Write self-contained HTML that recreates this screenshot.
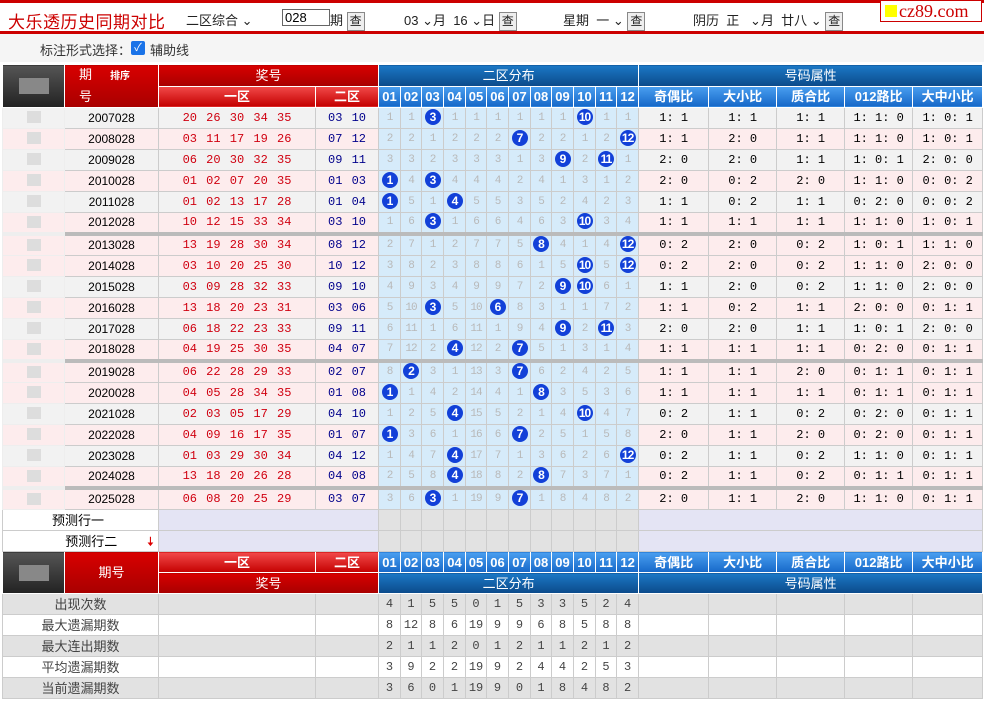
<!DOCTYPE html>
<html><head><meta charset="utf-8">
<style>
*{margin:0;padding:0;box-sizing:border-box}
body{width:984px;height:702px;overflow:hidden;background:#fff;font-family:"Liberation Sans","Noto Sans CJK SC",sans-serif;font-size:12px;color:#000;position:relative}
.top{position:absolute;left:0;top:0;width:984px;height:34px;border-top:3px solid #c00;border-bottom:3px solid #c00}
.title{position:absolute;left:8px;top:5px;font-size:17px;color:#c00;letter-spacing:0.5px}
.tb{position:absolute;top:7px;font-size:13px;color:#222}
.q{display:inline-block;border:1px solid #888;background:#eee;font-size:12px;padding:1px 2px;line-height:15px;vertical-align:middle}
.inp{position:absolute;left:282px;top:6px;width:48px;height:17px;border:1px solid #666;font-size:13px;padding-left:2px;line-height:15px}
.logo{position:absolute;left:880px;top:0;width:102px;height:22px;border:1px solid #c00;background:#fff;font-family:"Liberation Serif",serif;font-size:18px;color:#c00;line-height:20px;padding-left:4px}
.logo i{display:inline-block;width:12px;height:12px;background:#ff0;margin-right:2px}
.bar{position:absolute;left:0;top:34px;width:984px;height:28px;background:#f5f5f5;font-size:13px;color:#333}
.bar span{position:absolute;left:40px;top:6px}
.cb{position:absolute;left:131px;top:7px;width:14px;height:14px;background:#1a73e8;border-radius:2px;color:#fff;font-size:11px;line-height:14px;text-align:center}
.bar em{position:absolute;left:150px;top:6px;font-style:normal}
table{position:absolute;left:2px;top:64px;border-collapse:collapse;table-layout:fixed;width:980px}
td{height:21px;border:1px solid #ccc;text-align:center;padding:0;white-space:nowrap;overflow:hidden;line-height:19px}
.hr{background:linear-gradient(#d80000,#a80000);color:#fff;font-size:13px;border-color:#fff}
.hr2{background:linear-gradient(#f24a4a,#c40000);color:#fff;font-size:13px;font-weight:bold;border-color:#fff}
.hb{background:linear-gradient(#1b78c6,#0b4a8a);color:#fff;font-size:13px;border-color:#fff}
.hb2{background:linear-gradient(#4a9ff0,#1668c8);color:#fff;font-size:13px;font-weight:bold;border-color:#fff}
.hd{background:linear-gradient(#555,#222);border-color:#fff}
.hd i{display:inline-block;width:30px;height:16px;background:#888;vertical-align:middle}
.c0 i{display:inline-block;background:#ddd;width:14px;height:12px;vertical-align:middle}
.d td{font-family:"Liberation Mono","Noto Sans CJK SC",monospace;font-size:12px}
.d td:nth-child(2){font-family:"Liberation Sans",sans-serif}
.d td:nth-child(3){color:#d00010;word-spacing:2px}
.d td:nth-child(4){color:#00008b;word-spacing:2px}
.d td:nth-child(n+5):nth-child(-n+16){background:#d6ebfa;color:#b8b8b8;font-size:11px;letter-spacing:-1px}
.d td b{display:inline-block;width:16px;height:16px;border-radius:50%;background:#1240d8;color:#fff;font-family:"Liberation Sans",sans-serif;font-size:12px;line-height:16px;letter-spacing:-1px;vertical-align:middle}
.g td{background:#f2f2f2}
.p td{background:#fdeced}
.s td{border-top:4px solid #bbb}
.c0{border-color:#eee!important}
.pr td{background:#e4e4f4}
.pr td.w{background:#fff;text-align:right;padding-right:50px;font-size:13px}
.pr td.gr{background:#e2e2e2}
.st td{font-size:13px;color:#444}
.st td:nth-child(n+4){font-family:"Liberation Mono",monospace;font-size:12px}
.st.a td{background:#e2e2e2}
.st.b td{background:#fff}
</style></head><body>
<div class="top">
<div class="title">大乐透历史同期对比</div>
<div class="tb" style="left:186px">二区综合 ⌄</div>
<div class="inp">028</div>
<div class="tb" style="left:330px">期 <span class="q">查</span></div>
<div class="tb" style="left:404px">03 ⌄月 &nbsp;16 ⌄日 <span class="q">查</span></div>
<div class="tb" style="left:563px">星期 &nbsp;一 ⌄ <span class="q">查</span></div>
<div class="tb" style="left:693px">阴历 &nbsp;正 &nbsp; ⌄月 &nbsp;廿八 ⌄ <span class="q">查</span></div>
</div>
<div class="logo"><i></i>cz89.com</div>
<div class="bar"><span>标注形式选择：</span><div class="cb">✓</div><em>辅助线</em></div>
<table>
<colgroup><col style="width:62px"><col style="width:94px"><col style="width:157px"><col style="width:63px">
<col style="width:22px"><col style="width:21px"><col style="width:22px"><col style="width:22px"><col style="width:21px"><col style="width:22px"><col style="width:22px"><col style="width:21px"><col style="width:22px"><col style="width:22px"><col style="width:21px"><col style="width:22px">
<col style="width:70px"><col style="width:68px"><col style="width:68px"><col style="width:68px"><col style="width:70px"></colgroup>
<tr><td rowspan="2" class="hd"><i></i></td><td rowspan="2" class="hr" style="text-align:left;padding-left:14px;line-height:20px">期 &nbsp; &nbsp; <b style="font-size:10px">排序</b><br>号</td><td colspan="2" class="hr">奖号</td><td colspan="12" class="hb">二区分布</td><td colspan="5" class="hb">号码属性</td></tr>
<tr><td class="hr2">一区</td><td class="hr2">二区</td><td class="hb2">01</td><td class="hb2">02</td><td class="hb2">03</td><td class="hb2">04</td><td class="hb2">05</td><td class="hb2">06</td><td class="hb2">07</td><td class="hb2">08</td><td class="hb2">09</td><td class="hb2">10</td><td class="hb2">11</td><td class="hb2">12</td><td class="hb2">奇偶比</td><td class="hb2">大小比</td><td class="hb2">质合比</td><td class="hb2">012路比</td><td class="hb2">大中小比</td></tr>
<tr class="d g"><td class="c0"><i></i></td><td>2007028</td><td>20 26 30 34 35</td><td>03 10</td><td>1</td><td>1</td><td><b>3</b></td><td>1</td><td>1</td><td>1</td><td>1</td><td>1</td><td>1</td><td><b>10</b></td><td>1</td><td>1</td><td>1: 1</td><td>1: 1</td><td>1: 1</td><td>1: 1: 0</td><td>1: 0: 1</td></tr>
<tr class="d p"><td class="c0"><i></i></td><td>2008028</td><td>03 11 17 19 26</td><td>07 12</td><td>2</td><td>2</td><td>1</td><td>2</td><td>2</td><td>2</td><td><b>7</b></td><td>2</td><td>2</td><td>1</td><td>2</td><td><b>12</b></td><td>1: 1</td><td>2: 0</td><td>1: 1</td><td>1: 1: 0</td><td>1: 0: 1</td></tr>
<tr class="d g"><td class="c0"><i></i></td><td>2009028</td><td>06 20 30 32 35</td><td>09 11</td><td>3</td><td>3</td><td>2</td><td>3</td><td>3</td><td>3</td><td>1</td><td>3</td><td><b>9</b></td><td>2</td><td><b>11</b></td><td>1</td><td>2: 0</td><td>2: 0</td><td>1: 1</td><td>1: 0: 1</td><td>2: 0: 0</td></tr>
<tr class="d p"><td class="c0"><i></i></td><td>2010028</td><td>01 02 07 20 35</td><td>01 03</td><td><b>1</b></td><td>4</td><td><b>3</b></td><td>4</td><td>4</td><td>4</td><td>2</td><td>4</td><td>1</td><td>3</td><td>1</td><td>2</td><td>2: 0</td><td>0: 2</td><td>2: 0</td><td>1: 1: 0</td><td>0: 0: 2</td></tr>
<tr class="d g"><td class="c0"><i></i></td><td>2011028</td><td>01 02 13 17 28</td><td>01 04</td><td><b>1</b></td><td>5</td><td>1</td><td><b>4</b></td><td>5</td><td>5</td><td>3</td><td>5</td><td>2</td><td>4</td><td>2</td><td>3</td><td>1: 1</td><td>0: 2</td><td>1: 1</td><td>0: 2: 0</td><td>0: 0: 2</td></tr>
<tr class="d p"><td class="c0"><i></i></td><td>2012028</td><td>10 12 15 33 34</td><td>03 10</td><td>1</td><td>6</td><td><b>3</b></td><td>1</td><td>6</td><td>6</td><td>4</td><td>6</td><td>3</td><td><b>10</b></td><td>3</td><td>4</td><td>1: 1</td><td>1: 1</td><td>1: 1</td><td>1: 1: 0</td><td>1: 0: 1</td></tr>
<tr class="d p s"><td class="c0"><i></i></td><td>2013028</td><td>13 19 28 30 34</td><td>08 12</td><td>2</td><td>7</td><td>1</td><td>2</td><td>7</td><td>7</td><td>5</td><td><b>8</b></td><td>4</td><td>1</td><td>4</td><td><b>12</b></td><td>0: 2</td><td>2: 0</td><td>0: 2</td><td>1: 0: 1</td><td>1: 1: 0</td></tr>
<tr class="d p"><td class="c0"><i></i></td><td>2014028</td><td>03 10 20 25 30</td><td>10 12</td><td>3</td><td>8</td><td>2</td><td>3</td><td>8</td><td>8</td><td>6</td><td>1</td><td>5</td><td><b>10</b></td><td>5</td><td><b>12</b></td><td>0: 2</td><td>2: 0</td><td>0: 2</td><td>1: 1: 0</td><td>2: 0: 0</td></tr>
<tr class="d g"><td class="c0"><i></i></td><td>2015028</td><td>03 09 28 32 33</td><td>09 10</td><td>4</td><td>9</td><td>3</td><td>4</td><td>9</td><td>9</td><td>7</td><td>2</td><td><b>9</b></td><td><b>10</b></td><td>6</td><td>1</td><td>1: 1</td><td>2: 0</td><td>0: 2</td><td>1: 1: 0</td><td>2: 0: 0</td></tr>
<tr class="d p"><td class="c0"><i></i></td><td>2016028</td><td>13 18 20 23 31</td><td>03 06</td><td>5</td><td>10</td><td><b>3</b></td><td>5</td><td>10</td><td><b>6</b></td><td>8</td><td>3</td><td>1</td><td>1</td><td>7</td><td>2</td><td>1: 1</td><td>0: 2</td><td>1: 1</td><td>2: 0: 0</td><td>0: 1: 1</td></tr>
<tr class="d g"><td class="c0"><i></i></td><td>2017028</td><td>06 18 22 23 33</td><td>09 11</td><td>6</td><td>11</td><td>1</td><td>6</td><td>11</td><td>1</td><td>9</td><td>4</td><td><b>9</b></td><td>2</td><td><b>11</b></td><td>3</td><td>2: 0</td><td>2: 0</td><td>1: 1</td><td>1: 0: 1</td><td>2: 0: 0</td></tr>
<tr class="d p"><td class="c0"><i></i></td><td>2018028</td><td>04 19 25 30 35</td><td>04 07</td><td>7</td><td>12</td><td>2</td><td><b>4</b></td><td>12</td><td>2</td><td><b>7</b></td><td>5</td><td>1</td><td>3</td><td>1</td><td>4</td><td>1: 1</td><td>1: 1</td><td>1: 1</td><td>0: 2: 0</td><td>0: 1: 1</td></tr>
<tr class="d p s"><td class="c0"><i></i></td><td>2019028</td><td>06 22 28 29 33</td><td>02 07</td><td>8</td><td><b>2</b></td><td>3</td><td>1</td><td>13</td><td>3</td><td><b>7</b></td><td>6</td><td>2</td><td>4</td><td>2</td><td>5</td><td>1: 1</td><td>1: 1</td><td>2: 0</td><td>0: 1: 1</td><td>0: 1: 1</td></tr>
<tr class="d p"><td class="c0"><i></i></td><td>2020028</td><td>04 05 28 34 35</td><td>01 08</td><td><b>1</b></td><td>1</td><td>4</td><td>2</td><td>14</td><td>4</td><td>1</td><td><b>8</b></td><td>3</td><td>5</td><td>3</td><td>6</td><td>1: 1</td><td>1: 1</td><td>1: 1</td><td>0: 1: 1</td><td>0: 1: 1</td></tr>
<tr class="d g"><td class="c0"><i></i></td><td>2021028</td><td>02 03 05 17 29</td><td>04 10</td><td>1</td><td>2</td><td>5</td><td><b>4</b></td><td>15</td><td>5</td><td>2</td><td>1</td><td>4</td><td><b>10</b></td><td>4</td><td>7</td><td>0: 2</td><td>1: 1</td><td>0: 2</td><td>0: 2: 0</td><td>0: 1: 1</td></tr>
<tr class="d p"><td class="c0"><i></i></td><td>2022028</td><td>04 09 16 17 35</td><td>01 07</td><td><b>1</b></td><td>3</td><td>6</td><td>1</td><td>16</td><td>6</td><td><b>7</b></td><td>2</td><td>5</td><td>1</td><td>5</td><td>8</td><td>2: 0</td><td>1: 1</td><td>2: 0</td><td>0: 2: 0</td><td>0: 1: 1</td></tr>
<tr class="d g"><td class="c0"><i></i></td><td>2023028</td><td>01 03 29 30 34</td><td>04 12</td><td>1</td><td>4</td><td>7</td><td><b>4</b></td><td>17</td><td>7</td><td>1</td><td>3</td><td>6</td><td>2</td><td>6</td><td><b>12</b></td><td>0: 2</td><td>1: 1</td><td>0: 2</td><td>1: 1: 0</td><td>0: 1: 1</td></tr>
<tr class="d p"><td class="c0"><i></i></td><td>2024028</td><td>13 18 20 26 28</td><td>04 08</td><td>2</td><td>5</td><td>8</td><td><b>4</b></td><td>18</td><td>8</td><td>2</td><td><b>8</b></td><td>7</td><td>3</td><td>7</td><td>1</td><td>0: 2</td><td>1: 1</td><td>0: 2</td><td>0: 1: 1</td><td>0: 1: 1</td></tr>
<tr class="d p s"><td class="c0"><i></i></td><td>2025028</td><td>06 08 20 25 29</td><td>03 07</td><td>3</td><td>6</td><td><b>3</b></td><td>1</td><td>19</td><td>9</td><td><b>7</b></td><td>1</td><td>8</td><td>4</td><td>8</td><td>2</td><td>2: 0</td><td>1: 1</td><td>2: 0</td><td>1: 1: 0</td><td>0: 1: 1</td></tr>
<tr class="pr"><td colspan="2" class="w" style="padding-right:54px">预测行一</td><td colspan="2"></td><td class="gr"></td><td class="gr"></td><td class="gr"></td><td class="gr"></td><td class="gr"></td><td class="gr"></td><td class="gr"></td><td class="gr"></td><td class="gr"></td><td class="gr"></td><td class="gr"></td><td class="gr"></td><td colspan="5"></td></tr>
<tr class="pr"><td colspan="2" class="w" style="padding-right:4px">预测行二 <span style="color:#d00;margin-left:26px">🠇</span></td><td colspan="2"></td><td class="gr"></td><td class="gr"></td><td class="gr"></td><td class="gr"></td><td class="gr"></td><td class="gr"></td><td class="gr"></td><td class="gr"></td><td class="gr"></td><td class="gr"></td><td class="gr"></td><td class="gr"></td><td colspan="5"></td></tr>
<tr><td rowspan="2" class="hd"><i></i></td><td rowspan="2" class="hr">期号</td><td class="hr2">一区</td><td class="hr2">二区</td><td class="hb2">01</td><td class="hb2">02</td><td class="hb2">03</td><td class="hb2">04</td><td class="hb2">05</td><td class="hb2">06</td><td class="hb2">07</td><td class="hb2">08</td><td class="hb2">09</td><td class="hb2">10</td><td class="hb2">11</td><td class="hb2">12</td><td class="hb2">奇偶比</td><td class="hb2">大小比</td><td class="hb2">质合比</td><td class="hb2">012路比</td><td class="hb2">大中小比</td></tr>
<tr><td colspan="2" class="hr">奖号</td><td colspan="12" class="hb">二区分布</td><td colspan="5" class="hb">号码属性</td></tr>
<tr class="st a"><td colspan="2">出现次数</td><td></td><td></td><td>4</td><td>1</td><td>5</td><td>5</td><td>0</td><td>1</td><td>5</td><td>3</td><td>3</td><td>5</td><td>2</td><td>4</td><td></td><td></td><td></td><td></td><td></td></tr>
<tr class="st b"><td colspan="2">最大遗漏期数</td><td></td><td></td><td>8</td><td>12</td><td>8</td><td>6</td><td>19</td><td>9</td><td>9</td><td>6</td><td>8</td><td>5</td><td>8</td><td>8</td><td></td><td></td><td></td><td></td><td></td></tr>
<tr class="st a"><td colspan="2">最大连出期数</td><td></td><td></td><td>2</td><td>1</td><td>1</td><td>2</td><td>0</td><td>1</td><td>2</td><td>1</td><td>1</td><td>2</td><td>1</td><td>2</td><td></td><td></td><td></td><td></td><td></td></tr>
<tr class="st b"><td colspan="2">平均遗漏期数</td><td></td><td></td><td>3</td><td>9</td><td>2</td><td>2</td><td>19</td><td>9</td><td>2</td><td>4</td><td>4</td><td>2</td><td>5</td><td>3</td><td></td><td></td><td></td><td></td><td></td></tr>
<tr class="st a"><td colspan="2">当前遗漏期数</td><td></td><td></td><td>3</td><td>6</td><td>0</td><td>1</td><td>19</td><td>9</td><td>0</td><td>1</td><td>8</td><td>4</td><td>8</td><td>2</td><td></td><td></td><td></td><td></td><td></td></tr>
</table>
</body></html>
